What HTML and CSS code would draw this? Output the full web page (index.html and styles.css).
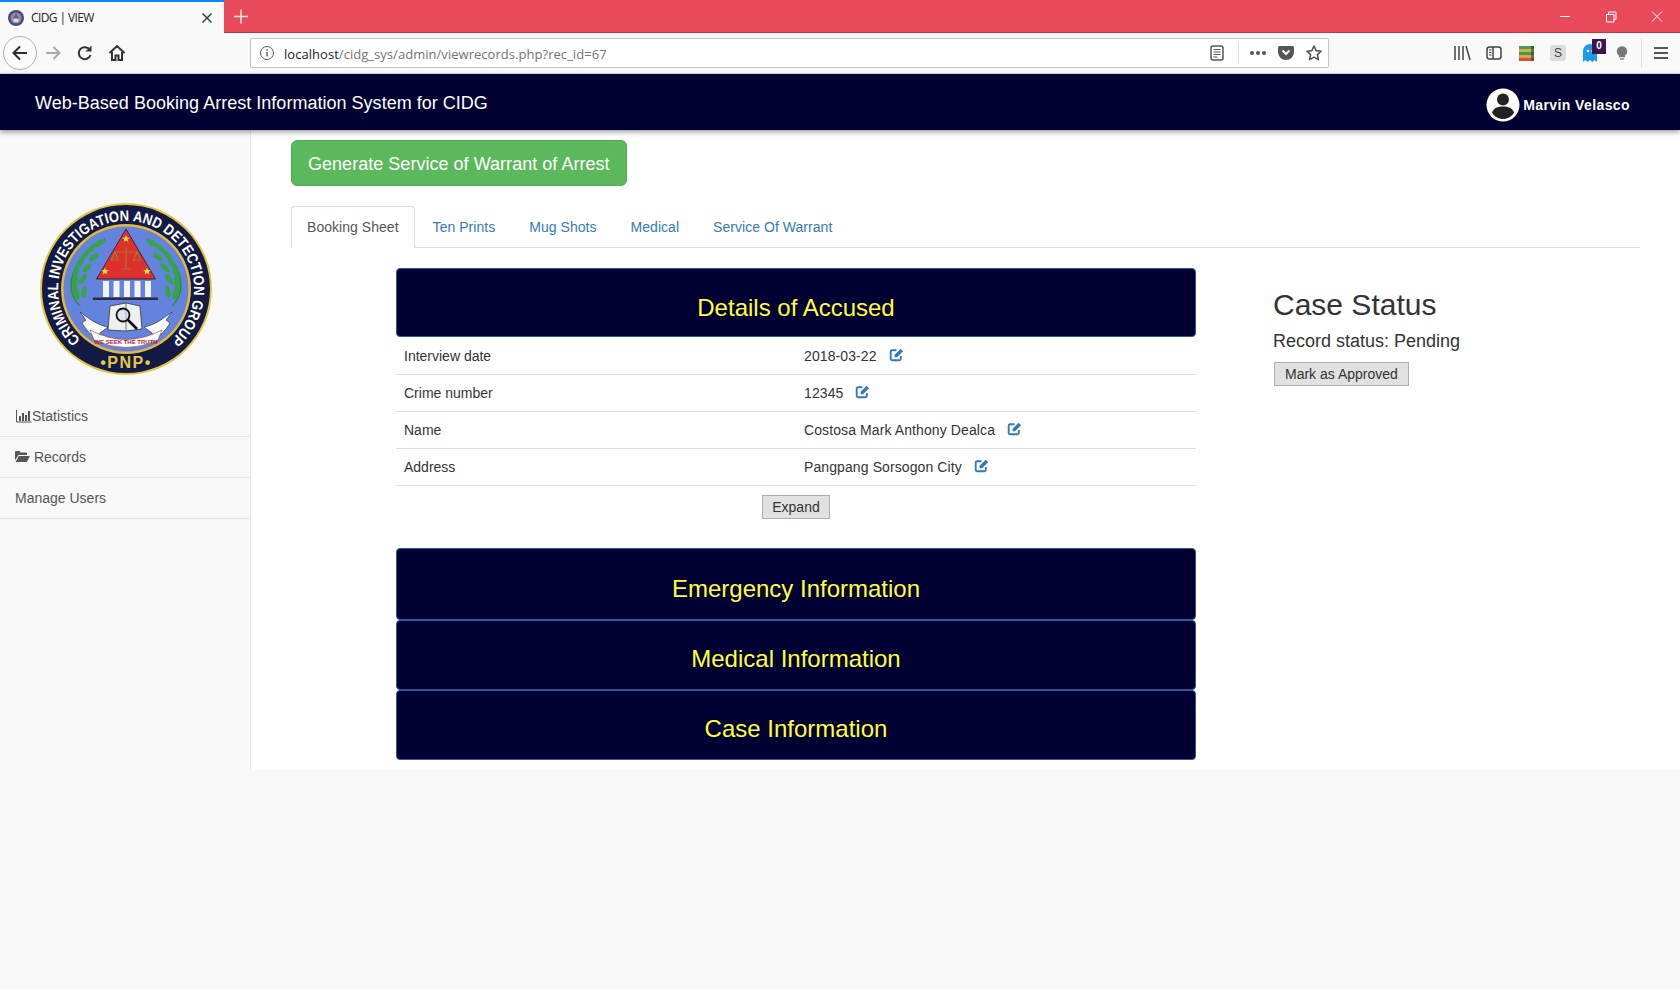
FILE: index.html
```html
<!DOCTYPE html>
<html lang="en">
<head>
    <meta charset="UTF-8">
    <title>CIDG | VIEW</title>
    <link rel="stylesheet" href="styles.css">
</head>
<body>
    <svg class="defs" width="0" height="0">
        <symbol id="edit" viewBox="0 0 16 16">
            <path d="M12.6 9.500v3a1.600 1.600 0 0 1-1.600 1.600H3.400a1.600 1.600 0 0 1-1.600-1.600V5a1.600 1.600 0 0 1 1.600-1.600H8" fill="none" stroke="currentColor" stroke-width="2"/>
            <path d="M6 8.200 12.400 1.800 15 4.400 8.600 10.800H6z" fill="currentColor"/>
        </symbol>
    </svg>

    <div class="browser">
        <div class="tabstrip">
            <div class="browser-tab">
                <svg class="favicon" width="16" height="16" viewBox="0 0 16 16">
                    <circle cx="8" cy="8" r="8" fill="#4a4d6b"/>
                    <circle cx="8" cy="8" r="5.500" fill="#7f90c9"/>
                    <path d="M8 3.500 11 8H5z" fill="#b3443f"/>
                    <rect x="5.500" y="9" width="5" height="3" fill="#ddd"/>
                </svg>
                <span class="browser-tab-title">CIDG | VIEW</span>
                <svg class="tab-close" width="12" height="12" viewBox="0 0 12 12"><path d="M1.500 1.500l9 9M10.500 1.500l-9 9" stroke="#333" stroke-width="1.400"/></svg>
            </div>
            <svg class="new-tab" width="34" height="33" viewBox="0 0 34 33"><path d="M17 9.500v14M10 16.500h14" stroke="#fff" stroke-width="1.600" opacity=".85"/></svg>
            <div class="window-controls">
                <svg width="46" height="33" viewBox="0 0 46 33"><path d="M18 16.500h10" stroke="#fff" stroke-width="1"/></svg>
                <svg width="46" height="33" viewBox="0 0 46 33"><path d="M18.500 14.500h7.500v7.500h-7.500zM20.500 14.500v-2.500h7.500v7.500h-2" fill="none" stroke="#fff" stroke-width="1"/></svg>
                <svg width="46" height="33" viewBox="0 0 46 33"><path d="M18 11.500l10 10M28 11.500l-10 10" stroke="#fff" stroke-width="1"/></svg>
            </div>
        </div>
        <div class="toolbar">
            <div class="tool-back">
                <svg width="18" height="18" viewBox="0 0 18 18"><path d="M16 9H2.500M9 2.500 2.500 9 9 15.500" fill="none" stroke="#2b2b2e" stroke-width="2"/></svg>
            </div>
            <div class="tool">
                <svg width="18" height="18" viewBox="0 0 18 18"><path d="M2 9h13.500M9.500 3l6 6-6 6" fill="none" stroke="#aaa" stroke-width="2"/></svg>
            </div>
            <div class="tool">
                <svg width="18" height="18" viewBox="0 0 18 18"><path d="M14.500 11a6 6 0 1 1-.6-5" fill="none" stroke="#333" stroke-width="2"/><path d="M15.500 1.500v6h-6z" fill="#333"/></svg>
            </div>
            <div class="tool">
                <svg width="18" height="18" viewBox="0 0 18 18"><path d="M1.500 9 9 2l7.500 7M4 8v8h3.500v-4.500h3V16H14V8" fill="none" stroke="#333" stroke-width="2"/></svg>
            </div>
            <div class="urlbar">
                <svg class="url-info" width="16" height="16" viewBox="0 0 16 16"><circle cx="8" cy="8" r="6.500" fill="none" stroke="#555" stroke-width="1"/><path d="M8 7v4.500M8 4.300v1.500" stroke="#555" stroke-width="1.400"/></svg>
                <span class="url-text"><span class="url-host">localhost</span>/cidg_sys/admin/viewrecords.php?rec_id=67</span>
                <div class="url-actions">
                    <div class="url-action">
                        <svg width="16" height="16" viewBox="0 0 16 16"><rect x="2" y="1" width="12" height="14" rx="2" fill="none" stroke="#555" stroke-width="1.500"/><path d="M4.500 4.500h7M4.500 7h7M4.500 9.500h7M4.500 12h4" stroke="#555" stroke-width="1.200"/></svg>
                    </div>
                    <span class="url-divider"></span>
                    <div class="url-action">
                        <svg width="18" height="6" viewBox="0 0 18 6"><circle cx="3" cy="3" r="2" fill="#555"/><circle cx="9" cy="3" r="2" fill="#555"/><circle cx="15" cy="3" r="2" fill="#555"/></svg>
                    </div>
                    <div class="url-action">
                        <svg width="16" height="16" viewBox="0 0 16 16"><path d="M1.500 1h13A1.500 1.500 0 0 1 16 2.500V7A8 8 0 0 1 0 7V2.500A1.500 1.500 0 0 1 1.500 1z" fill="#555"/><path d="M4.500 5.500 8 9l3.500-3.500" fill="none" stroke="#fff" stroke-width="2"/></svg>
                    </div>
                    <div class="url-action">
                        <svg width="18" height="18" viewBox="0 0 18 18"><path d="M9 2l2.100 4.600 5 .6-3.700 3.400 1 5L9 13.100l-4.400 2.500 1-5L1.900 7.200l5-.6z" fill="none" stroke="#555" stroke-width="1.600" stroke-linejoin="round"/></svg>
                    </div>
                </div>
            </div>
            <div class="toolbar-right">
                <div class="tool">
                    <svg width="18" height="16" viewBox="0 0 18 16"><path d="M2 1v14M6 1v14M10 1v14M13 1l4 14" stroke="#444" stroke-width="1.500" fill="none"/></svg>
                </div>
                <div class="tool">
                    <svg width="16" height="14" viewBox="0 0 16 14"><rect x="1" y="1" width="14" height="12" rx="2.500" fill="none" stroke="#444" stroke-width="1.500"/><path d="M7 1v12" stroke="#444" stroke-width="1.500"/><path d="M3 4h2.500M3 6.500h2.500M3 9h2.500" stroke="#444"/></svg>
                </div>
                <div class="tool">
                    <svg width="15" height="15" viewBox="0 0 15 15">
                        <rect width="15" height="3" fill="#4a9f4a"/><rect y="3" width="15" height="3" fill="#c9b83d"/><rect y="6" width="15" height="3" fill="#3d9a6a"/><rect y="9" width="15" height="3" fill="#e8a03c"/><rect y="12" width="15" height="3" fill="#d8503c"/>
                        <rect x="12" width="3" height="15" fill="#333" opacity=".55"/>
                    </svg>
                </div>
                <div class="tool">
                    <span class="s-badge">S</span>
                </div>
                <div class="tool">
                    <svg width="14" height="18" viewBox="0 0 14 18"><path d="M0 7a7 7 0 0 1 14 0v11l-2.300-2-2.300 2-2.400-2-2.400 2-2.300-2L0 18z" fill="#1d9be8"/><circle cx="5" cy="7" r="1.200" fill="#fff"/><circle cx="9.500" cy="7" r="1.200" fill="#fff"/></svg>
                    <span class="ghost-count">0</span>
                </div>
                <div class="tool">
                    <svg width="12" height="14" viewBox="0 0 14 16"><path d="M7 0a6 6 0 0 1 3.500 10.900V13h-7v-2.100A6 6 0 0 1 7 0z" fill="#777"/><rect x="4.500" y="14" width="5" height="2" fill="#999"/></svg>
                </div>
                <span class="toolbar-divider"></span>
                <div class="tool">
                    <svg width="16" height="14" viewBox="0 0 16 14"><path d="M1 2h14M1 7h14M1 12h14" stroke="#222" stroke-width="1.700"/></svg>
                </div>
            </div>
        </div>
    </div>

    <header class="navbar">
        <span class="navbar-title">Web-Based Booking Arrest Information System for CIDG</span>
        <div class="navbar-user">
            <svg width="34" height="34" viewBox="0 0 34 34">
                <circle cx="17" cy="17" r="16.500" fill="#fff"/>
                <circle cx="17" cy="11.500" r="6" fill="#222"/>
                <path d="M6 24.500c1.500-4.500 6-6 11-6s9.500 1.500 11 6c-2 4-6.500 6.500-11 6.500s-9-2.500-11-6.500z" fill="#222"/>
            </svg>
            <span class="navbar-username">Marvin Velasco</span>
        </div>
    </header>

    <div class="layout">
        <aside class="sidebar">
            <svg class="logo" width="172" height="172" viewBox="0 0 172 172">
                <defs>
                    <path id="logo-arc" d="M40.600 136.600A68 68 0 1 1 131.400 136.600"/>
                </defs>
                <circle cx="86" cy="86" r="86" fill="#e3c43f"/>
                <circle cx="86" cy="86" r="84" fill="#121a45"/>
                <circle cx="86" cy="86" r="65" fill="#e3b93c"/>
                <circle cx="86" cy="86" r="62.500" fill="#6483dc"/>
                <text class="logo-ring-text"><textPath href="#logo-arc" textLength="328" lengthAdjust="spacingAndGlyphs">CRIMINAL INVESTIGATION AND DETECTION GROUP</textPath></text>
                <text class="logo-pnp" x="86" y="165" text-anchor="middle">•PNP•</text>
                <!-- laurels -->
                <path d="M40 103C22 85 32 55 65 36" fill="none" stroke="#2c8f3a" stroke-width="1.500"/>
                <path d="M132 103C150 85 140 55 107 36" fill="none" stroke="#2c8f3a" stroke-width="1.500"/>
                <g fill="#33a544">
                    <ellipse cx="60" cy="40" rx="6" ry="2.500" transform="rotate(-30 60 40)"/>
                    <ellipse cx="52" cy="45" rx="6" ry="2.500" transform="rotate(-45 52 45)"/>
                    <ellipse cx="45" cy="52" rx="6" ry="2.500" transform="rotate(-50 45 52)"/>
                    <ellipse cx="40" cy="60" rx="6.500" ry="2.500" transform="rotate(-60 40 60)"/>
                    <ellipse cx="36" cy="69" rx="6.500" ry="2.800" transform="rotate(-70 36 69)"/>
                    <ellipse cx="35" cy="79" rx="7" ry="3" transform="rotate(-85 35 79)"/>
                    <ellipse cx="36" cy="90" rx="7" ry="3" transform="rotate(70 36 90)"/>
                    <ellipse cx="44" cy="89" rx="6" ry="2.500" transform="rotate(100 44 89)"/>
                    <ellipse cx="43" cy="76" rx="6" ry="2.500" transform="rotate(125 43 76)"/>
                    <ellipse cx="47" cy="65" rx="6" ry="2.500" transform="rotate(135 47 65)"/>
                    <ellipse cx="54" cy="54" rx="6" ry="2.500" transform="rotate(140 54 54)"/>
                    <ellipse cx="112" cy="40" rx="6" ry="2.500" transform="rotate(30 112 40)"/>
                    <ellipse cx="120" cy="45" rx="6" ry="2.500" transform="rotate(45 120 45)"/>
                    <ellipse cx="127" cy="52" rx="6" ry="2.500" transform="rotate(50 127 52)"/>
                    <ellipse cx="132" cy="60" rx="6.500" ry="2.500" transform="rotate(60 132 60)"/>
                    <ellipse cx="136" cy="69" rx="6.500" ry="2.800" transform="rotate(70 136 69)"/>
                    <ellipse cx="137" cy="79" rx="7" ry="3" transform="rotate(85 137 79)"/>
                    <ellipse cx="136" cy="90" rx="7" ry="3" transform="rotate(-70 136 90)"/>
                    <ellipse cx="128" cy="89" rx="6" ry="2.500" transform="rotate(-100 128 89)"/>
                    <ellipse cx="129" cy="76" rx="6" ry="2.500" transform="rotate(-125 129 76)"/>
                    <ellipse cx="125" cy="65" rx="6" ry="2.500" transform="rotate(-135 125 65)"/>
                    <ellipse cx="118" cy="54" rx="6" ry="2.500" transform="rotate(-140 118 54)"/>
                </g>
                <!-- triangle and scales -->
                <path d="M86 26 115.500 76H56.500z" fill="#dd2f2b" stroke="#1a1a33" stroke-width=".8"/>
                <g fill="#f6dc3c">
                    <path d="M86 32l1 2.600 2.800.1-2.200 1.700.8 2.700L86 37.500l-2.400 1.600.8-2.700-2.200-1.700 2.800-.1z"/>
                    <path d="M65 64.500l1 2.600 2.800.1-2.200 1.700.8 2.700L65 70l-2.400 1.600.8-2.700-2.200-1.700 2.800-.1z"/>
                    <path d="M107 64.500l1 2.600 2.800.1-2.200 1.700.8 2.700L107 70l-2.400 1.600.8-2.700-2.200-1.700 2.800-.1z"/>
                </g>
                <g fill="none" stroke="#a8792a" stroke-width="1.200">
                    <path d="M86 44v21M75 49h22M81 66h10"/>
                    <path d="M75 49l-3.500 8h7zM97 49l-3.500 8h7z"/>
                </g>
                <!-- columns -->
                <g fill="#f3f3f3">
                    <rect x="63" y="78" width="6" height="16"/>
                    <rect x="73.500" y="78" width="6" height="16"/>
                    <rect x="84" y="78" width="6" height="16"/>
                    <rect x="94.500" y="78" width="6" height="16"/>
                    <rect x="105" y="78" width="6" height="16"/>
                </g>
                <rect x="53" y="94.500" width="65" height="2.500" fill="#2a2d45"/>
                <!-- banner and book -->
                <path d="M40 109C52 118 58 122 68 124L60 130 58 136C50 132 45 125 42 120L46 117z" fill="#fff" stroke="#222" stroke-width=".6"/>
                <path d="M132 109C120 118 114 122 104 124L112 130 114 136C122 132 127 125 130 120L126 117z" fill="#fff" stroke="#222" stroke-width=".6"/>
                <path d="M50 127Q86 146 122 127L118 137Q86 152 54 137z" fill="#fff" stroke="#a33" stroke-width=".6"/>
                <text class="logo-banner-text" x="86" y="141" text-anchor="middle">WE SEEK THE TRUTH</text>
                <path d="M70 103 86 100 100 103 102 126 86 128 68 127z" fill="#efefef" stroke="#333" stroke-width=".8"/>
                <path d="M86 100v28" stroke="#555" stroke-width=".8"/>
                <circle cx="83" cy="112" r="6.500" fill="#cfe0f0" fill-opacity=".6" stroke="#111" stroke-width="1.800"/>
                <path d="M88 117 97 126" stroke="#111" stroke-width="2.600"/>
            </svg>
            <nav class="side-nav">
                <a class="side-link">
                    <svg class="side-icon-chart" width="16" height="14" viewBox="0 0 16 14"><path d="M.5 1v12h15" fill="none" stroke="#555"/><path d="M3 7h2v5H3zM6 4h2v8H6zM9 6h2v6H9zM12 2h2v10h-2z" fill="#555"/></svg><span>Statistics</span>
                </a>
                <a class="side-link">
                    <svg class="side-icon-folder" width="15" height="13" viewBox="0 0 15 13"><path d="M0 2a1 1 0 0 1 1-1h3.500l1 1.500H11a1 1 0 0 1 1 1V5H3.500L0 10.500z" fill="#555"/><path d="M3.800 6H15l-3.200 6H.6z" fill="#555"/></svg>
                    Records
                </a>
                <a class="side-link">Manage Users</a>
            </nav>
        </aside>

        <main class="content">
            <button class="btn-generate">Generate Service of Warrant of Arrest</button>

            <ul class="tabs">
                <li class="tab tab-active">Booking Sheet</li>
                <li class="tab">Ten Prints</li>
                <li class="tab">Mug Shots</li>
                <li class="tab">Medical</li>
                <li class="tab">Service Of Warrant</li>
            </ul>

            <div class="tab-pane">
                <section class="records">
                    <div class="panel-head panel-first">Details of Accused</div>
                    <table class="details">
                        <tr>
                            <td>Interview date</td>
                            <td class="value">2018-03-22 <svg class="edit-icon"><use href="#edit"/></svg></td>
                        </tr>
                        <tr>
                            <td>Crime number</td>
                            <td class="value">12345 <svg class="edit-icon"><use href="#edit"/></svg></td>
                        </tr>
                        <tr>
                            <td>Name</td>
                            <td class="value">Costosa Mark Anthony Dealca <svg class="edit-icon"><use href="#edit"/></svg></td>
                        </tr>
                        <tr>
                            <td>Address</td>
                            <td class="value">Pangpang Sorsogon City <svg class="edit-icon"><use href="#edit"/></svg></td>
                        </tr>
                    </table>
                    <div class="expand-row">
                        <button class="btn-plain">Expand</button>
                    </div>
                    <div class="panel-head panel-tall">Emergency Information</div>
                    <div class="panel-head">Medical Information</div>
                    <div class="panel-head">Case Information</div>
                </section>

                <section class="status">
                    <h2 class="status-title">Case Status</h2>
                    <p class="status-line">Record status: Pending</p>
                    <button class="btn-plain btn-approve">Mark as Approved</button>
                </section>
            </div>
        </main>
    </div>
</body>
</html>
```

FILE: styles.css
```css
html, body {
    margin: 0;
    height: 100%;
    overflow: hidden;
    background-color: #f8f8f8;
}

body {
    font-family: "Liberation Sans", Arial, sans-serif;
    font-size: 14px;
    color: #333;
}

.defs {position: absolute;}

/* browser window */
.tabstrip {
    display: flex;
    height: 33px;
    background-color: #e84a5b;
    box-sizing: border-box;
    border-bottom: 1px solid #b23c4a;
}

.browser-tab {
    display: flex;
    align-items: center;
    width: 224px;
    height: 33px;
    box-sizing: border-box;
    border-top: 2px solid #0a84ff;
    background-color: #f9f9fa;
    padding: 0 11px 0 8px;
}

.browser-tab-title {
    font-family: "Open Sans", sans-serif;
    font-size: 12px;
    letter-spacing: -.6px;
    color: #222;
    margin-left: 7px;
}

.tab-close {margin-left: auto;}

.window-controls {
    display: flex;
    margin-left: auto;
}

.toolbar {
    display: flex;
    align-items: center;
    height: 41px;
    box-sizing: border-box;
    background-color: #f9f9fa;
    border-bottom: 1px solid #e0e0e2;
    padding-left: 3px;
}

.tool {
    display: flex;
    align-items: center;
    justify-content: center;
    width: 32px;
    height: 32px;
    position: relative;
}

.tool-back {
    display: flex;
    align-items: center;
    justify-content: center;
    width: 32px;
    height: 32px;
    border: 1px solid #b1b1b3;
    border-radius: 50%;
    background-color: #fbfbfc;
}

.urlbar {
    display: flex;
    align-items: center;
    width: 1079px;
    height: 30px;
    margin-left: 117px;
    box-sizing: border-box;
    border: 1px solid #c4c4c6;
    border-radius: 2px;
    background-color: #fff;
    padding-left: 8px;
}

.url-text {
    font-family: "Open Sans", sans-serif;
    font-size: 13px;
    letter-spacing: .04px;
    color: #737373;
    margin: 1px 0 0 9px;
}

.url-host {color: #222;}

.url-actions {
    display: flex;
    align-items: center;
    margin-left: auto;
}

.url-action {
    display: flex;
    align-items: center;
    justify-content: center;
    width: 28px;
    height: 28px;
}

.url-divider {
    width: 1px;
    height: 22px;
    background-color: #ddd;
    margin: 0 5px 0 7px;
}

.toolbar-right {
    display: flex;
    align-items: center;
    margin-left: 117px;
}

.toolbar-divider {
    width: 1px;
    height: 30px;
    background-color: #e0e0e2;
    margin: 0 3px;
}

.s-badge {
    display: flex;
    align-items: center;
    justify-content: center;
    width: 16px;
    height: 16px;
    border-radius: 2px;
    background-color: #ddd;
    font-size: 12px;
    color: #444;
}

.ghost-count {
    position: absolute;
    top: 2px;
    right: 0;
    width: 14px;
    height: 15px;
    background-color: #3c1450;
    color: #fff;
    font-size: 10px;
    font-weight: 700;
    line-height: 14px;
    text-align: center;
}

/* app header */
.navbar {
    position: relative;
    z-index: 2;
    display: flex;
    align-items: center;
    justify-content: space-between;
    height: 56px;
    background-color: #000033;
    box-shadow: 0 2px 5px rgba(0, 0, 0, .4);
    padding: 0 50px 0 35px;
    color: #fff;
}

.navbar-title {
    font-size: 18px;
    letter-spacing: .02px;
    margin-top: 2px;
}

.navbar-user {
    display: flex;
    align-items: center;
    gap: 3px;
    margin-top: 6px;
}

.navbar-username {
    font-weight: 700;
    font-size: 14px;
    letter-spacing: .4px;
}

/* page */
.layout {
    display: flex;
    height: 640px;
    background-color: #fff;
}

.sidebar {
    width: 251px;
    box-sizing: border-box;
    flex-shrink: 0;
    background-color: #f8f8f8;
    border-right: 1px solid #e7e7e7;
    padding-top: 73px;
}

.logo {
    display: block;
    margin: 0 0 21px 40px;
}

.logo-ring-text {
    font-size: 15px;
    font-weight: 700;
    fill: #fff;
}

.logo-pnp {
    font-size: 16px;
    font-weight: 700;
    letter-spacing: 1.500px;
    fill: #e8c83e;
}

.logo-banner-text {
    font-size: 6px;
    font-weight: 700;
    fill: #b5262a;
}

.side-link {
    display: block;
    height: 41px;
    box-sizing: border-box;
    padding: 10px 15px;
    line-height: 20px;
    border-bottom: 1px solid #e7e7e7;
    color: #555;
}

.side-icon-chart {vertical-align: -2px; margin-left: 1px;}
.side-icon-folder {vertical-align: -1px;}

.content {
    flex: 1;
    padding: 10px 40px 0;
}

.btn-generate {
    display: block;
    height: 46px;
    padding: 2px 16px 0;
    font-family: inherit;
    font-size: 18px;
    letter-spacing: .03px;
    color: #fff;
    background-color: #5cb85c;
    border: 1px solid #4cae4c;
    border-radius: 6px;
}

.tabs {
    display: flex;
    list-style: none;
    margin: 20px 0 0;
    padding: 0;
    height: 42px;
    box-sizing: border-box;
    border-bottom: 1px solid #ddd;
}

.tab {
    height: 42px;
    box-sizing: border-box;
    margin-right: 2px;
    padding: 10px 15px;
    line-height: 20px;
    letter-spacing: .04px;
    border: 1px solid transparent;
    border-radius: 4px 4px 0 0;
    color: #337ab7;
}

.tab-active {
    color: #555;
    background-color: #fff;
    border-color: #ddd #ddd #fff;
}

.tab-pane {
    display: flex;
    padding-top: 20px;
}

.records {
    width: 800px;
    margin-left: 105px;
}

.panel-head {
    height: 70px;
    box-sizing: border-box;
    padding-top: 8px;
    display: flex;
    align-items: center;
    justify-content: center;
    background-color: #000033;
    border: 1px solid #2e5a94;
    border-radius: 4px;
    color: #ffff33;
    font-size: 24px;
}

.panel-first {
    height: 69px;
    padding-top: 11px;
}

.panel-tall {
    height: 72px;
    padding-top: 10px;
}

.details {
    width: 100%;
    table-layout: fixed;
    border-collapse: collapse;
}

.details td {
    height: 37px;
    box-sizing: border-box;
    padding: 0 8px;
    border-bottom: 1px solid #ddd;
    line-height: 20px;
}

.details tr:first-child td {padding-top: 2px;}

.details .value {letter-spacing: .1px;}

.edit-icon {
    width: 15px;
    height: 15px;
    margin-left: 8px;
    vertical-align: -1px;
    color: #337ab7;
}

.expand-row {
    display: flex;
    justify-content: center;
    padding: 9px 0 29px;
}

.btn-plain {
    display: block;
    height: 24px;
    padding: 0 9px;
    font-family: inherit;
    font-size: 14px;
    color: #333;
    background-color: #e1e1e1;
    border: 1px solid #adadad;
}

.btn-approve {
    margin-left: 1px;
    padding: 0 10px;
}

.status {
    margin-left: 77px;
    padding-top: 20px;
}

.status-title {
    margin: 0;
    font-size: 30px;
    font-weight: 400;
    line-height: 33px;
}

.status-line {
    margin: 7px 0 8px;
    font-size: 18px;
    line-height: 26px;
}
```
